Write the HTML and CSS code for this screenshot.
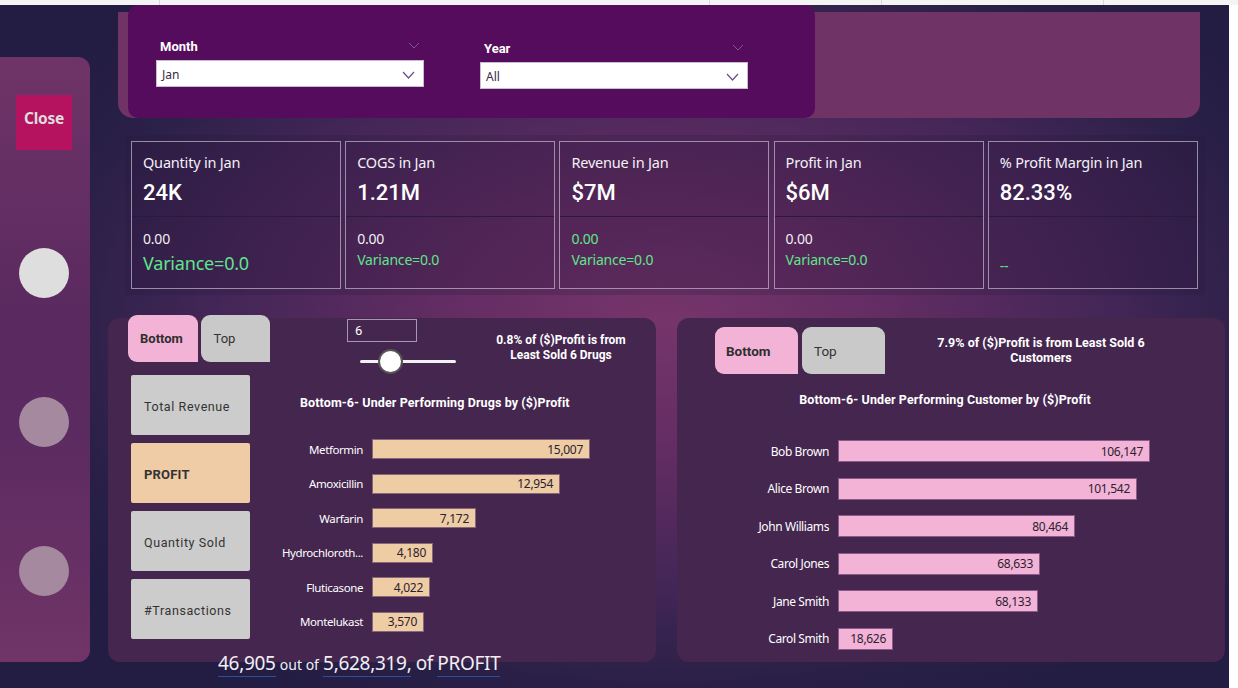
FILE: index.html
```html
<!DOCTYPE html>
<html lang="en">
<head>
<meta charset="utf-8">
<title>Profit Dashboard</title>
<link rel="stylesheet" href="styles.css">
</head>
<body>
<div class="topbar">
  <span class="seg seg-a"></span><span class="seg seg-b"></span><span class="seg seg-c"></span><span class="seg seg-d"></span><span class="seg seg-e"></span>
</div>
<div class="screen">
  <div class="canvas">
    <aside class="nav">
      <button class="close">Close</button>
      <span class="dot dot-on"></span>
      <span class="dot"></span>
      <span class="dot"></span>
    </aside>
    <main class="main">
      <section class="slicers">
        <div class="slicer-box">
          <div class="slicer">
            <div class="slicer-head"><span class="slicer-label">Month</span>
              <svg class="fold" width="12" height="7" viewBox="0 0 12 7"><path d="M1 1l5 5 5-5" fill="none" stroke="#7d5a86" stroke-width="1"/></svg></div>
            <div class="dropdown"><span>Jan</span>
              <svg width="13" height="8" viewBox="0 0 13 8"><path d="M1 1l5.5 6 5.5-6" fill="none" stroke="#6b4f86" stroke-width="1.2"/></svg></div>
          </div>
          <div class="slicer slicer-year">
            <div class="slicer-head"><span class="slicer-label">Year</span>
              <svg class="fold" width="12" height="7" viewBox="0 0 12 7"><path d="M1 1l5 5 5-5" fill="none" stroke="#7d5a86" stroke-width="1"/></svg></div>
            <div class="dropdown"><span>All</span>
              <svg width="13" height="8" viewBox="0 0 13 8"><path d="M1 1l5.5 6 5.5-6" fill="none" stroke="#6b4f86" stroke-width="1.2"/></svg></div>
          </div>
        </div>
      </section>

      <section class="kpis">
        <div class="card">
          <div class="card-top"><div class="card-title">Quantity in Jan</div><div class="card-value">24K</div></div>
          <div class="card-bottom"><div class="card-sub">0.00</div><div class="card-var card-var-lg">Variance=0.0</div></div>
        </div>
        <div class="card">
          <div class="card-top"><div class="card-title">COGS in Jan</div><div class="card-value">1.21M</div></div>
          <div class="card-bottom"><div class="card-sub">0.00</div><div class="card-var">Variance=0.0</div></div>
        </div>
        <div class="card">
          <div class="card-top"><div class="card-title">Revenue in Jan</div><div class="card-value">$7M</div></div>
          <div class="card-bottom"><div class="card-sub green">0.00</div><div class="card-var">Variance=0.0</div></div>
        </div>
        <div class="card">
          <div class="card-top"><div class="card-title">Profit in Jan</div><div class="card-value">$6M</div></div>
          <div class="card-bottom"><div class="card-sub">0.00</div><div class="card-var">Variance=0.0</div></div>
        </div>
        <div class="card">
          <div class="card-top"><div class="card-title">% Profit Margin in Jan</div><div class="card-value">82.33%</div></div>
          <div class="card-bottom"><div class="card-sub"></div><div class="card-var card-dash">--</div></div>
        </div>
      </section>

      <section class="panels">
        <div class="panel panel-drugs">
          <div class="side">
            <div class="tabs">
              <span class="tab tab-on">Bottom</span><span class="tab">Top</span>
            </div>
            <div class="metrics">
              <span class="metric">Total Revenue</span>
              <span class="metric metric-on">PROFIT</span>
              <span class="metric">Quantity Sold</span>
              <span class="metric">#Transactions</span>
            </div>
          </div>
          <div class="chart">
            <div class="chart-head">
              <div class="control">
                <div class="num-input">6</div>
                <div class="slider"><span class="thumb"></span></div>
              </div>
              <div class="note note-drugs">0.8% of ($)Profit is from Least Sold 6 Drugs</div>
            </div>
            <div class="chart-title drugs-title">Bottom-6- Under Performing Drugs by ($)Profit</div>
            <div class="bars drug-bars">
              <div class="bar-row"><span class="bar-label">Metformin</span><span class="bar-track"><span class="bar bar-tan" style="width:218px">15,007</span></span></div>
              <div class="bar-row"><span class="bar-label">Amoxicillin</span><span class="bar-track"><span class="bar bar-tan" style="width:188px">12,954</span></span></div>
              <div class="bar-row"><span class="bar-label">Warfarin</span><span class="bar-track"><span class="bar bar-tan" style="width:104px">7,172</span></span></div>
              <div class="bar-row"><span class="bar-label">Hydrochloroth...</span><span class="bar-track"><span class="bar bar-tan" style="width:61px">4,180</span></span></div>
              <div class="bar-row"><span class="bar-label">Fluticasone</span><span class="bar-track"><span class="bar bar-tan" style="width:58px">4,022</span></span></div>
              <div class="bar-row"><span class="bar-label">Montelukast</span><span class="bar-track"><span class="bar bar-tan" style="width:52px">3,570</span></span></div>
            </div>
          </div>
        </div>

        <div class="panel panel-cust">
          <div class="cust-head">
            <div class="tabs tabs-cust">
              <span class="tab tab-on">Bottom</span><span class="tab">Top</span>
            </div>
            <div class="note note-cust">7.9% of ($)Profit is from Least Sold 6 Customers</div>
          </div>
          <div class="chart-title cust-title">Bottom-6- Under Performing Customer by ($)Profit</div>
          <div class="bars cust-bars">
            <div class="bar-row"><span class="bar-label">Bob Brown</span><span class="bar-track"><span class="bar bar-pink" style="width:312px">106,147</span></span></div>
            <div class="bar-row"><span class="bar-label">Alice Brown</span><span class="bar-track"><span class="bar bar-pink" style="width:299px">101,542</span></span></div>
            <div class="bar-row"><span class="bar-label">John Williams</span><span class="bar-track"><span class="bar bar-pink" style="width:237px">80,464</span></span></div>
            <div class="bar-row"><span class="bar-label">Carol Jones</span><span class="bar-track"><span class="bar bar-pink" style="width:202px">68,633</span></span></div>
            <div class="bar-row"><span class="bar-label">Jane Smith</span><span class="bar-track"><span class="bar bar-pink" style="width:200px">68,133</span></span></div>
            <div class="bar-row"><span class="bar-label">Carol Smith</span><span class="bar-track"><span class="bar bar-pink" style="width:55px">18,626</span></span></div>
          </div>
        </div>
      </section>

      <div class="total">
        <span class="big u">46,905</span> <span class="small">out of</span> <span class="big u">5,628,319,</span> <span class="big">of</span> <span class="big u">PROFIT</span>
      </div>
    </main>
  </div>
  <div class="edge"></div>
</div>
</body>
</html>
```

FILE: styles.css
```css
* { box-sizing: border-box; }

html, body {
  margin: 0;
  padding: 0;
  background: #ffffff;
  font-family: "Noto Sans", "Open Sans", sans-serif;
  color: #ffffff;
}

.topbar {
  height: 5px;
  display: flex;
  background: #f4f4f4;
}
.seg { height: 5px; border-right: 1px solid #d8d8d8; }
.seg-a { width: 160px; }
.seg-b { width: 550px; }
.seg-c { width: 172px; }
.seg-d { width: 222px; }
.seg-e { width: 134px; border-right: 0; }

.screen { display: flex; }

.canvas {
  width: 1229px;
  height: 683px;
  display: flex;
  background:
    radial-gradient(ellipse 720px 430px at 54% 46%, #76356b 0%, #632d63 30%, #432657 62%, #2a2047 85%, #231c43 100%);
  overflow: hidden;
}

.edge { width: 9px; height: 683px; background: #ffffff; }

/* left nav */
.nav {
  width: 90px;
  height: 605px;
  margin-top: 52px;
  border-radius: 0 12px 12px 0;
  background: linear-gradient(to bottom, #6f3467 0%, #59295f 45%, #5a2a60 60%, #703467 100%);
  display: flex;
  flex-direction: column;
  align-items: flex-start;
  padding-top: 38px;
}
.close {
  margin-left: 16px;
  width: 56px;
  height: 55px;
  border: 0;
  padding: 0 0 9px;
  background: #b5125f;
  color: #dcdcdc;
  font-family: "Noto Sans", "Open Sans", sans-serif;
  font-weight: 700;
  font-size: 15.5px;
  letter-spacing: -0.3px;
}
.dot {
  width: 50px;
  height: 50px;
  border-radius: 50%;
  margin-left: 19px;
  margin-top: 99px;
  background: #a58a9f;
}
.dot-on { background: #dedede; margin-top: 98px; }

/* main column */
.main {
  flex: 1;
  padding-left: 18px;
  display: flex;
  flex-direction: column;
}

.slicers {
  margin-left: 10px;
  width: 1082px;
  height: 113px;
  border-radius: 0 0 15px 15px;
  background: linear-gradient(to bottom, transparent 7px, #6f3366 7px);
}
.slicer-box {
  margin-left: 10px;
  width: 687px;
  height: 113px;
  border-radius: 10px;
  background: #560c5c;
  display: flex;
  padding: 33px 0 0 28px;
  gap: 56px;
}
.slicer { width: 268px; }
.slicer-year { margin-top: 2px; }
.slicer-head {
  height: 20px;
  display: flex;
  justify-content: space-between;
  align-items: flex-start;
  padding: 0 4px;
}
.slicer-label {
  font-family: Roboto, sans-serif;
  font-weight: 700;
  font-size: 13px;
  line-height: 18px;
}
.fold { margin-top: 4px; }
.dropdown {
  margin-top: 2px;
  height: 27px;
  background: #ffffff;
  border: 1px solid #cbbdd0;
  display: flex;
  align-items: center;
  justify-content: space-between;
  padding: 2px 8px 0 5px;
  color: #3a2a46;
  font-family: "Noto Sans", sans-serif;
  font-size: 12px;
}

/* KPI cards */
.kpis {
  margin-left: 17px;
  margin-top: 17px;
  width: 1080px;
  height: 160px;
  padding: 6px;
  background: rgba(38, 22, 58, 0.22);
  display: grid;
  grid-template-columns: repeat(5, 210px);
  column-gap: 4.2px;
}
.card {
  height: 148px;
  border: 1px solid rgba(196, 186, 206, 0.7);
  background: rgba(60, 30, 70, 0.15);
  display: flex;
  flex-direction: column;
}
.card-top {
  height: 75px;
  border-bottom: 1px solid #2c1b38;
  padding: 9px 0 0 11px;
}
.card-title { font-size: 14.5px; line-height: 22px; letter-spacing: -0.2px; color: #f4f0f6; }
.card-value {
  margin-top: 6px;
  font-family: Roboto, sans-serif;
  font-weight: 500;
  font-size: 22px;
  line-height: 28px;
  color: #ffffff;
}
.card-bottom { padding: 12px 0 0 11px; }
.card-sub { font-size: 14px; line-height: 20px; height: 20px; color: #f2eef4; letter-spacing: -0.2px; }
.card-sub.green { color: #5fe58a; }
.card-var { font-size: 14px; line-height: 22px; color: #5fe58a; letter-spacing: -0.2px; }
.card-var-lg { font-size: 18px; line-height: 24px; margin-top: 2px; }
.card-dash { margin-top: 6px; }

/* panels */
.panels {
  margin-top: 23px;
  display: flex;
  gap: 21px;
}
.panel {
  width: 548px;
  height: 344px;
  border-radius: 12px;
  background: #45264f;
}
.panel-drugs { display: flex; }
.side { width: 162px; padding-left: 20px; }
.tabs { display: flex; gap: 3px; margin-top: -3px; }
.tab {
  width: 70px;
  height: 47px;
  border-radius: 9px 9px 0 9px;
  background: #c9c9c9;
  color: #333333;
  font-family: Roboto, sans-serif;
  font-size: 13px;
  display: flex;
  align-items: center;
  padding-left: 13px;
}
.tab-on { background: #f3b3d7; font-weight: 700; color: #2e2e2e; padding-left: 12px; }
.metrics {
  margin-top: 13px;
  margin-left: 3px;
  display: flex;
  flex-direction: column;
  gap: 8px;
}
.metric {
  width: 119px;
  height: 60px;
  border-radius: 2px;
  background: #cccccc;
  color: #333333;
  font-family: Roboto, sans-serif;
  font-size: 12.5px;
  letter-spacing: 0.6px;
  display: flex;
  align-items: center;
  padding-left: 13px;
  padding-top: 2px;
}
.metric-on { background: #efcca5; font-weight: 700; font-size: 13px; letter-spacing: 0.2px; }

.chart { flex: 1; }
.chart-head { display: flex; height: 78px; }
.control { width: 206px; padding-left: 77px; padding-top: 1px; }
.num-input {
  width: 70px;
  height: 23px;
  border: 1px solid #a896b2;
  font-family: Roboto, sans-serif;
  font-size: 13px;
  line-height: 21px;
  padding-left: 7px;
}
.slider {
  position: relative;
  margin-top: 18px;
  margin-left: 13px;
  width: 96px;
  height: 3px;
  border-radius: 2px;
  background: #f2f2f2;
}
.thumb {
  position: absolute;
  left: 18px;
  top: -11px;
  width: 25px;
  height: 25px;
  border-radius: 50%;
  background: #ffffff;
  border: 2.5px solid #555555;
}
.note {
  text-align: center;
  font-family: Roboto, sans-serif;
  font-weight: 700;
  font-size: 12px;
  line-height: 15px;
}
.note-drugs { width: 146px; margin-left: 12px; padding-top: 15px; }
.chart-title {
  font-family: Roboto, sans-serif;
  font-weight: 700;
  font-size: 12.5px;
  line-height: 14px;
  letter-spacing: 0.1px;
}
.drugs-title { margin-left: 30px; }

.bars { display: flex; flex-direction: column; }
.bar-row { display: flex; align-items: center; }
.bar-label {
  text-align: right;
  font-family: "Noto Sans", sans-serif;
  font-size: 11.5px;
  letter-spacing: -0.4px;
  white-space: nowrap;
  color: #ffffff;
}
.bar-track { display: block; }
.bar {
  display: flex;
  align-items: center;
  justify-content: flex-end;
  padding-right: 6px;
  font-family: "Noto Sans", sans-serif;
  font-size: 12px;
  letter-spacing: -0.3px;
  color: #2a2230;
}
.bar-tan { background: #eecca4; border: 1px solid #87657a; }
.bar-pink { background: #f3b3d7; border: 1px solid #8b5a88; }

.drug-bars { margin-top: 29px; gap: 14.5px; }
.drug-bars .bar-label { width: 93px; margin-right: 9px; }
.drug-bars .bar { height: 20px; }

.cust-head { display: flex; height: 70px; padding-top: 9px; }
.tabs-cust { margin-top: 0; margin-left: 38px; gap: 4px; }
.tabs-cust .tab { width: 83px; height: 47px; padding-left: 12px; font-size: 13.5px; }
.tabs-cust .tab-on { padding-left: 11px; }
.note-cust { width: 230px; margin-left: 41px; padding-top: 8px; font-size: 12.5px; }
.cust-title { text-align: center; width: 536px; margin-top: 5px; }
.cust-bars { margin-top: 33px; gap: 15.5px; }
.cust-bars .bar-label { width: 152px; margin-right: 9px; font-size: 12px; }
.cust-bars .bar { height: 22px; }

/* totals line */
.total {
  margin-top: -12px;
  margin-left: 110px;
  font-family: "Noto Sans", sans-serif;
  line-height: 26px;
  color: #f2eef4;
  white-space: nowrap;
}
.big { font-size: 19px; letter-spacing: -0.3px; }
.small { font-size: 14px; }
.u { border-bottom: 1.5px solid #2f4d9c; }
```
